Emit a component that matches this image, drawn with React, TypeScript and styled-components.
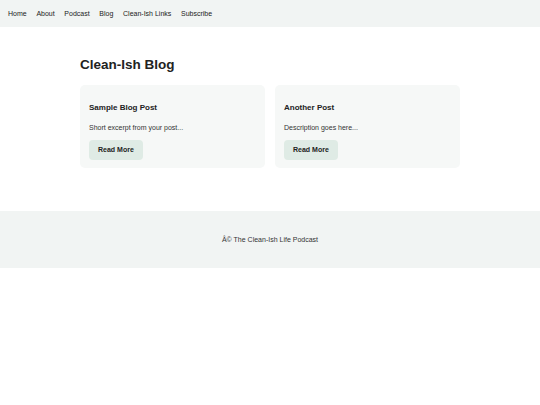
import styled, { createGlobalStyle } from "styled-components";

const GlobalStyle = createGlobalStyle`
  body {
    margin: 0;
    background: #ffffff;
    font-family: "Liberation Sans", Arial, sans-serif;
    color: #222222;
  }
`;

const Nav = styled.nav`
  height: 27px;
  padding: 0px 8px;

  gap: 9.7px;
  display: flex;
  align-items: center;

  background: #f1f4f3;
`;

const NavLink = styled.a`
  color: #222222;
  font-size: 7px;
  line-height: 8px;
  text-decoration: none;
  cursor: pointer;
`;

const Main = styled.main`
  width: 380px;
  margin: 0px auto;
  padding: 30px 0px 43px;
`;

const PageTitle = styled.h1`
  margin: 0px 0px 12px;

  font-size: 13.5px;
  font-weight: 700;
  line-height: 15.5px;
  color: #222222;
`;

const CardGrid = styled.div`
  gap: 10px;
  display: grid;
  grid-template-columns: 1fr 1fr;
`;

const Card = styled.article`
  padding: 8px 9px;
  border-radius: 5px;

  display: flex;
  flex-direction: column;
  align-items: flex-start;

  background: #f6f8f7;
`;

const CardTitle = styled.h3`
  margin: 10px 0px 12px;

  font-size: 8px;
  font-weight: 700;
  line-height: 9px;
  color: #222222;
`;

const Excerpt = styled.p`
  margin: 0px 0px 8px;

  font-size: 7px;
  line-height: 8px;
  color: #333333;
`;

const ReadMore = styled.button`
  height: 20px;
  padding: 0px 9px;
  border: none;
  border-radius: 4px;

  cursor: pointer;
  background: #dfebe5;

  font-family: inherit;
  font-size: 7px;
  font-weight: 700;
  color: #222222;
`;

const Footer = styled.footer`
  height: 57px;

  display: flex;
  align-items: center;
  justify-content: center;

  background: #f1f4f3;
  font-size: 7px;
  color: #333333;
`;

const NAV_ITEMS = ["Home", "About", "Podcast", "Blog", "Clean-Ish Links", "Subscribe"];

const POSTS = [
  { id: 1, title: "Sample Blog Post", excerpt: "Short excerpt from your post..." },
  { id: 2, title: "Another Post", excerpt: "Description goes here..." },
];

export default function App() {
  return (
    <>
      <GlobalStyle />
      <Nav>
        {NAV_ITEMS.map((item) => (
          <NavLink key={item}>{item}</NavLink>
        ))}
      </Nav>

      <Main>
        <PageTitle>Clean-Ish Blog</PageTitle>
        <CardGrid>
          {POSTS.map((post) => (
            <Card key={post.id}>
              <CardTitle>{post.title}</CardTitle>
              <Excerpt>{post.excerpt}</Excerpt>
              <ReadMore>Read More</ReadMore>
            </Card>
          ))}
        </CardGrid>
      </Main>

      <Footer>Â© The Clean-Ish Life Podcast</Footer>
    </>
  );
}
